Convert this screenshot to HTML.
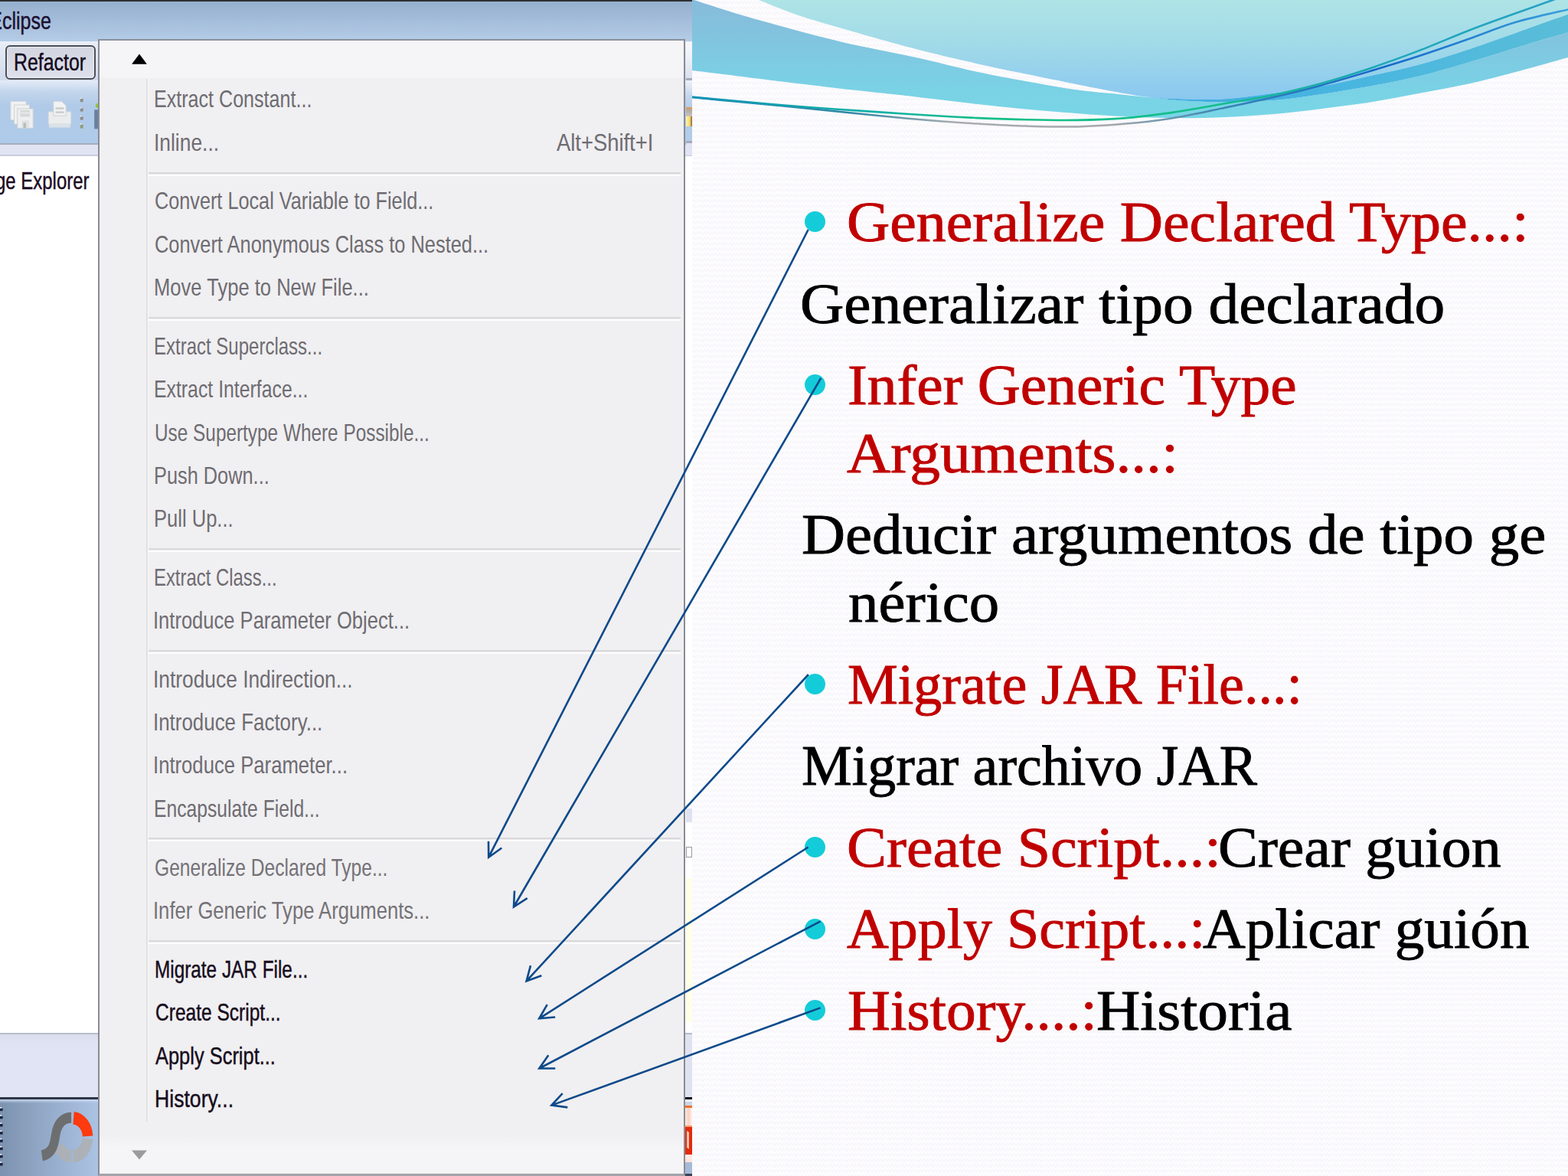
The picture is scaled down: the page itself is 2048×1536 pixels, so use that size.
<!DOCTYPE html>
<html lang="es">
<head>
<meta charset="utf-8">
<title>Eclipse Refactor menu</title>
<style>
html,body{margin:0;padding:0}
body{width:2048px;height:1536px;position:relative;overflow:hidden;background:#fcfbfd}
.abs{position:absolute}
.layer{position:absolute;left:0;top:0;width:0;height:0}
.t{position:absolute;white-space:nowrap;line-height:1;transform-origin:0 0;z-index:6}
.f-sans{font-family:"Liberation Sans",sans-serif}
.f-serif{font-family:"Liberation Serif",serif}
.mi{z-index:4}
.st{-webkit-text-stroke:0.9px currentColor}
.en{-webkit-text-stroke:0.45px currentColor}
.shot{position:absolute;left:0;top:0;width:903.5px;height:1536px;overflow:hidden;background:#fff;z-index:2}
.shot div,.shot i{position:absolute;display:block}
.topbar{left:0;top:0;width:904px;height:2px;background:#2f3032}
.title{left:0;top:2px;width:904px;height:53px;background:linear-gradient(#95b0ce 0,#a2bbd9 40%,#b5cde7 100%)}
.menubar{left:0;top:54px;width:904px;height:51px;background:linear-gradient(#e9eef7,#d9e2f0 60%,#cfdaec)}
.refbtn{left:6.5px;top:58.5px;width:114px;height:41px;border:2px solid #4d4f57;border-radius:6px;background:linear-gradient(#d2d5e0,#d8dbe6 50%,#dde0eb);box-shadow:inset 0 0 0 1.2px rgba(255,255,255,.5)}
.toolbar{left:0;top:105px;width:904px;height:82px;background:linear-gradient(#e4ecf7 0,#c3d5ec 18%,#b0cae8 40%,#aecbe9 100%)}
.tb-line{left:0;top:186.5px;width:904px;height:2px;background:#a4adbe}
.strip{left:0;top:188.5px;width:904px;height:14px;background:#e1e4f3}
.strip2{left:0;top:201.5px;width:904px;height:2px;background:#c9cddb}
.b-line{left:0;top:1348.5px;width:904px;height:2.5px;background:#b9bdca}
.b-strip{left:0;top:1351px;width:904px;height:84px;background:linear-gradient(#d9dcec,#e0e3f3 12%,#e1e4f4)}
.b-dark{left:0;top:1433.3px;width:904px;height:2.4px;background:#2f3747}
.taskbar{left:0;top:1435.7px;width:904px;height:101px;background:linear-gradient(rgba(205,220,240,.9) 0,rgba(205,220,240,0) 5px),linear-gradient(90deg,#7b92b0 0,#889ebb 30px,#a2b9da 100px,#abc3e4 130px)}
.menu{left:127.7px;top:50.7px;width:763.5px;height:1480.6px;border:2px solid #8b8b95;border-top-color:#8a919b;border-bottom:3px solid #a3a3aa;background:#f0eff1;z-index:3}
.menu .hd{left:0;top:0;width:100%;height:49.5px;background:#f5f4f6}
.menu .ft{left:0;top:1430px;width:100%;height:49px;background:linear-gradient(#f0eff1,#f5f4f6 30%)}
.menu .gut1{left:61.6px;top:50.5px;width:1.4px;height:1362px;background:#e0dfe2}
.menu .gut2{left:63px;top:50.5px;width:1.8px;height:1362px;background:#fbfbfc}
.sep{position:absolute;left:193.7px;width:695px;height:5px;z-index:4;background:linear-gradient(#d9d8db 0,#d9d8db 45%,#fdfdfe 55%,#fdfdfe 100%)}
.bul{position:absolute;display:block;width:27px;height:27px;border-radius:50%;background:#14ccd9;z-index:4}
</style>
</head>
<body>
<svg class="abs" style="left:903.5px;top:0;z-index:0" width="1144.5" height="1536">
<defs><pattern id="tx" width="9.4" height="7" patternUnits="userSpaceOnUse"><rect width="9.4" height="7" fill="#fdfcfe"/><path d="M-0.5 5.6L2.35 1.6L4.7 5.6L7.05 1.6L9.9 5.6" fill="none" stroke="#f7f5f9" stroke-width="1.1"/></pattern></defs>
<rect width="1144.5" height="1536" fill="url(#tx)"/></svg>
<svg class="abs" style="left:0;top:0;z-index:1" width="2048" height="200" viewBox="0 0 2048 200">
<defs>
<linearGradient id="gB" x1="0" y1="0" x2="0" y2="135" gradientUnits="userSpaceOnUse"><stop offset="0" stop-color="#afe4e6"/><stop offset="0.4" stop-color="#a2dbe8"/><stop offset="1" stop-color="#89c6f0"/></linearGradient>
<linearGradient id="gA" x1="0" y1="0" x2="0" y2="150" gradientUnits="userSpaceOnUse"><stop offset="0" stop-color="#87bbda"/><stop offset="0.3" stop-color="#82c3de"/><stop offset="0.6" stop-color="#7ccde3"/><stop offset="0.85" stop-color="#79d3e5"/><stop offset="1" stop-color="#78d5e6"/></linearGradient>
<linearGradient id="gC" x1="1495" y1="0" x2="2048" y2="0" gradientUnits="userSpaceOnUse"><stop offset="0" stop-color="#3fabe0"/><stop offset="0.5" stop-color="#49b6e0"/><stop offset="1" stop-color="#5abdd8"/></linearGradient>
<linearGradient id="gG" x1="903" y1="0" x2="2048" y2="0" gradientUnits="userSpaceOnUse"><stop offset="0" stop-color="#1193b4"/><stop offset="0.2" stop-color="#12b0a8"/><stop offset="0.35" stop-color="#14bf86"/><stop offset="0.6" stop-color="#15bd8c"/><stop offset="0.75" stop-color="#1aa9b4"/><stop offset="1" stop-color="#2aa2c8"/></linearGradient>
<linearGradient id="gY" x1="903" y1="0" x2="2048" y2="0" gradientUnits="userSpaceOnUse"><stop offset="0" stop-color="#1487b6"/><stop offset="0.18" stop-color="#2f86a4"/><stop offset="0.3" stop-color="#a9acb0"/><stop offset="0.48" stop-color="#a4a8ac"/><stop offset="0.6" stop-color="#3b86b4"/><stop offset="0.78" stop-color="#1565c8"/><stop offset="1" stop-color="#3aa0dc"/></linearGradient>
<clipPath id="cs"><rect x="903.5" y="0" width="1145" height="200"/></clipPath>
</defs>
<g clip-path="url(#cs)">
<path d="M988.5 -1.0C997.1 2.3 1022.1 12.8 1040.0 19.0C1057.9 25.2 1070.0 28.5 1096.0 36.0C1122.0 43.5 1162.7 55.4 1196.0 64.0C1229.3 72.6 1272.5 82.2 1296.0 87.5C1319.5 92.8 1318.3 92.2 1337.0 96.0C1355.7 99.8 1387.5 106.4 1408.0 110.5C1428.5 114.6 1445.4 117.9 1460.0 120.5C1474.6 123.1 1483.3 124.9 1495.5 126.3C1507.7 127.7 1516.3 128.5 1533.0 129.0C1549.7 129.5 1573.7 130.7 1595.5 129.5C1617.3 128.3 1642.2 124.6 1664.0 121.8C1685.8 119.0 1705.5 116.3 1726.5 112.5C1747.5 108.7 1769.2 103.6 1790.0 99.0C1810.8 94.4 1829.8 90.8 1851.5 85.0C1873.2 79.2 1894.5 72.5 1920.0 64.0C1945.5 55.5 1982.8 41.7 2004.5 34.0C2026.2 26.3 2042.4 20.7 2050.0 18.0L2050 -2L988 -2Z" fill="url(#gB)"/>
<path d="M903.5 -1.0C911.2 1.5 934.6 9.2 950.0 14.0C965.4 18.8 971.7 20.8 996.0 27.5C1020.3 34.2 1062.7 46.1 1096.0 54.0C1129.3 61.9 1165.8 68.3 1196.0 75.0C1226.2 81.7 1253.1 88.8 1277.0 94.0C1300.9 99.2 1317.7 102.1 1339.5 106.0C1361.3 109.9 1387.9 114.8 1408.0 117.6C1428.1 120.4 1445.4 121.5 1460.0 123.0C1474.6 124.5 1483.3 125.4 1495.5 126.6C1507.7 127.8 1516.3 129.2 1533.0 130.4C1549.7 131.6 1573.7 133.4 1595.5 133.5C1617.3 133.6 1642.2 132.7 1664.0 131.0C1685.8 129.3 1705.5 126.2 1726.5 123.1C1747.5 120.0 1769.2 116.3 1790.0 112.5C1810.8 108.7 1829.8 105.2 1851.5 100.0C1873.2 94.8 1894.5 88.5 1920.0 81.0C1945.5 73.5 1982.8 61.5 2004.5 55.0C2026.2 48.5 2042.4 44.2 2050.0 42.0L2050.0 74.5C2038.2 77.8 2001.5 88.2 1979.5 94.0C1957.5 99.8 1939.1 104.8 1918.0 109.5C1896.9 114.2 1874.3 118.0 1853.0 122.0C1831.7 126.0 1811.1 130.2 1790.0 133.5C1768.9 136.8 1747.5 139.3 1726.5 141.9C1705.5 144.5 1685.8 147.1 1664.0 149.0C1642.2 150.9 1617.3 152.4 1595.5 153.2C1573.7 154.1 1553.8 154.3 1533.0 154.1C1512.2 153.9 1491.3 153.2 1470.5 152.2C1449.7 151.3 1429.9 149.8 1408.0 148.2C1386.1 146.6 1360.8 144.5 1339.0 142.5C1317.2 140.5 1300.8 138.7 1277.0 136.0C1253.2 133.3 1216.8 128.9 1196.0 126.5C1175.2 124.1 1168.7 123.4 1152.0 121.6C1135.3 119.8 1117.8 118.0 1096.0 115.5C1074.2 113.0 1047.5 109.8 1021.0 106.6C994.5 103.3 956.6 98.4 937.0 96.0C917.4 93.6 909.1 92.7 903.5 92.0Z" fill="url(#gA)"/>
<path d="M1500.0 126.8C1505.5 127.2 1517.1 128.6 1533.0 129.0C1548.9 129.4 1573.7 130.7 1595.5 129.5C1617.3 128.3 1642.2 124.6 1664.0 121.8C1685.8 119.0 1705.5 116.3 1726.5 112.5C1747.5 108.7 1769.2 103.6 1790.0 99.0C1810.8 94.4 1829.8 90.8 1851.5 85.0C1873.2 79.2 1894.5 72.5 1920.0 64.0C1945.5 55.5 1982.8 41.7 2004.5 34.0C2026.2 26.3 2042.4 20.7 2050.0 18.0L2050.0 42.0C2042.4 44.2 2026.2 48.5 2004.5 55.0C1982.8 61.5 1945.5 73.5 1920.0 81.0C1894.5 88.5 1873.2 94.8 1851.5 100.0C1829.8 105.2 1810.8 108.7 1790.0 112.5C1769.2 116.3 1747.5 120.0 1726.5 123.1C1705.5 126.2 1685.8 129.3 1664.0 131.0C1642.2 132.7 1617.3 133.6 1595.5 133.5C1573.7 133.4 1548.9 131.5 1533.0 130.4C1517.1 129.3 1505.5 127.4 1500.0 126.8Z" fill="url(#gC)"/>
<path d="M903.5 126.9C912.9 127.9 940.4 130.7 960.0 132.6C979.6 134.5 999.3 136.2 1021.0 138.3C1042.7 140.4 1068.2 143.1 1090.0 145.3C1111.8 147.5 1131.2 149.6 1152.0 151.6C1172.8 153.6 1194.2 155.5 1215.0 157.2C1235.8 158.9 1256.2 160.4 1277.0 161.6C1297.8 162.8 1318.2 164.0 1340.0 164.6C1361.8 165.2 1386.2 165.9 1408.0 165.4C1429.8 164.9 1449.7 163.5 1470.5 161.6C1491.3 159.7 1512.2 157.4 1533.0 154.1C1553.8 150.8 1573.7 146.2 1595.5 141.6C1617.3 137.0 1642.2 131.9 1664.0 126.8C1685.8 121.7 1705.7 116.9 1726.5 111.2C1747.3 105.6 1768.2 99.3 1789.0 93.1C1809.8 86.8 1830.0 80.8 1851.5 73.8C1873.0 66.7 1896.7 58.5 1918.0 51.0C1939.3 43.5 1957.5 35.5 1979.5 29.0C2001.5 22.5 2038.2 14.8 2050.0 12.0" fill="none" stroke="url(#gY)" stroke-width="2.5"/>
<path d="M903.5 126.6C912.9 127.5 940.4 130.0 960.0 131.8C979.6 133.6 999.3 135.4 1021.0 137.2C1042.7 139.0 1068.2 140.9 1090.0 142.5C1111.8 144.1 1131.2 145.2 1152.0 146.6C1172.8 148.0 1194.2 149.6 1215.0 150.8C1235.8 152.1 1256.2 153.2 1277.0 154.1C1297.8 155.0 1318.2 155.8 1340.0 156.3C1361.8 156.8 1386.2 157.3 1408.0 156.9C1429.8 156.5 1449.7 155.8 1470.5 154.1C1491.3 152.4 1512.2 149.6 1533.0 146.6C1553.8 143.6 1573.7 139.8 1595.5 136.0C1617.3 132.2 1642.2 128.4 1664.0 123.9C1685.8 119.4 1705.7 114.5 1726.5 108.8C1747.3 103.0 1768.2 96.4 1789.0 89.4C1809.8 82.4 1830.0 75.1 1851.5 66.9C1873.0 58.7 1897.4 48.0 1918.0 40.0C1938.6 32.0 1956.2 25.8 1975.0 19.0C1993.8 12.2 2021.7 2.3 2031.0 -1.0" fill="none" stroke="url(#gG)" stroke-width="2.6"/>
</g></svg>
<div class="shot">
  <div class="title"></div>
  <div class="topbar"></div>
  <div class="menubar"></div>
  <div class="refbtn"></div>
  <div class="toolbar"></div>
  <div class="tb-line"></div>
  <div class="strip"></div>
  <div class="strip2"></div>
  <svg class="abs" style="left:0;top:104px" width="132" height="84" viewBox="0 104 132 84">
  <g opacity=".92">
    <!-- save all (disabled) -->
    <rect x="14" y="132.5" width="20" height="24" fill="#f6f6f4" stroke="#dcdcda" stroke-width="1"/>
    <rect x="18.5" y="137" width="20" height="25" fill="#f4f4f2" stroke="#d6d6d4" stroke-width="1"/>
    <rect x="22.8" y="142" width="20.4" height="25.3" fill="#f3f3f1" stroke="#d2d2d0" stroke-width="1"/>
    <rect x="26.5" y="144" width="12.5" height="8.5" fill="#dadad8"/>
    <rect x="26.5" y="146.5" width="12.5" height="2" fill="#ececea"/>
    <rect x="28.6" y="157.5" width="9" height="9.8" fill="#e2e2e0"/>
    <rect x="30.5" y="160.5" width="3.4" height="6.8" fill="#b9b9b7"/>
    <!-- print (disabled) -->
    <path d="M70 132.7H80.5L86 138V151H70Z" fill="#f7f7f5" stroke="#dededc" stroke-width="1"/>
    <rect x="72.5" y="140.2" width="11" height="2.6" fill="#cfcfcd"/>
    <rect x="72.5" y="145.4" width="11" height="2.6" fill="#cfcfcd"/>
    <path d="M63.3 146H69.5V151.5H86.5V146H92.7V162H63.3Z" fill="#f0f0ee" stroke="#dcdcda" stroke-width="1"/>
    <rect x="64" y="162" width="28" height="4.6" fill="#dfe3e8"/>
  </g>
  <!-- dotted handle -->
  <g fill="#8f8b86">
    <rect x="104.8" y="128.8" width="3.8" height="4.4"/><rect x="104.8" y="141.2" width="3.8" height="4.4"/>
    <rect x="104.8" y="152.2" width="3.8" height="4.4"/><rect x="104.8" y="162.6" width="3.8" height="5" fill="#8f9a78"/>
  </g>
  <g fill="#e6ecf6" opacity=".8">
    <rect x="104.2" y="127.6" width="3" height="1.6"/><rect x="104.2" y="140" width="3" height="1.6"/>
    <rect x="104.2" y="151" width="3" height="1.6"/><rect x="104.2" y="161.4" width="3" height="1.6"/>
  </g>
  <rect x="123.2" y="143.3" width="8" height="25" fill="#67809f"/>
  <circle cx="127.8" cy="138" r="3" fill="#8cc63f"/>
</svg>
  <div class="b-line"></div>
  <div class="b-strip"></div>
  <div class="b-dark"></div>
  <div class="taskbar"></div>
  <svg class="abs" style="left:0;top:1436px" width="132" height="100" viewBox="0 1436 132 100">
  <g fill="#18253f">
    <rect x="0" y="1447.5" width="3.6" height="3.6"/><rect x="0" y="1457.7" width="3.6" height="3.6"/><rect x="0" y="1467.9" width="3.6" height="3.6"/><rect x="0" y="1478.1" width="3.6" height="3.6"/>
    <rect x="0" y="1488.3" width="3.6" height="3.6"/><rect x="0" y="1498.5" width="3.6" height="3.6"/><rect x="0" y="1508.7" width="3.6" height="3.6"/><rect x="0" y="1518.9" width="3.6" height="3.6"/>
  </g>
  <g fill="#e8eef8">
    <rect x="0" y="1446" width="2.4" height="1.5"/><rect x="0" y="1456.2" width="2.4" height="1.5"/><rect x="0" y="1466.4" width="2.4" height="1.5"/><rect x="0" y="1476.6" width="2.4" height="1.5"/>
    <rect x="0" y="1486.8" width="2.4" height="1.5"/><rect x="0" y="1497" width="2.4" height="1.5"/><rect x="0" y="1507.2" width="2.4" height="1.5"/><rect x="0" y="1517.4" width="2.4" height="1.5"/>
  </g>
  <g fill="none" stroke-width="13.4" transform="translate(94.3 1485.3) scale(1 1.24)">
    <path d="M1.77 -20.22A20.3 20.3 0 0 1 20.27 -1.06" stroke="#ff3a0e"/>
    <path d="M20.22 1.77A20.3 20.3 0 0 1 1.42 20.25" stroke="#adb0b3" stroke-opacity=".9"/>
    <path d="M-1.42 20.25A20.3 20.3 0 0 1 -17.92 9.53" stroke="#adb0b3" stroke-opacity=".9"/>
    <path d="M-1.2 -20.6C-13 -20.6 -19.5 -13 -21.5 -3C-23.5 7.5 -25 17 -39.5 19.5" stroke="#6d6e70" stroke-width="11.4"/>
  </g>
</svg>
  <div style="left:895.5px;top:55px;width:9px;height:48px;background:linear-gradient(#f6f8fc,#eef1f8 40%,#d9dfee)"></div>
  <div style="left:895.5px;top:102px;width:9px;height:2.5px;background:#a5adbc"></div>
  <div style="left:895.5px;top:104.5px;width:9px;height:80px;background:linear-gradient(#eef2fa,#c5d6ec 25%,#b0cbe8 50%,#b3cde9)"></div>
  <div style="left:896px;top:140px;width:8px;height:12px;background:linear-gradient(#e79a4a,#b5aaa4 35%,#c9c3c4)"></div>
  <div style="left:896px;top:152px;width:8px;height:13px;background:linear-gradient(90deg,#fbf3b0,#f7dc6a 60%,#8a5a3c)"></div>
  <div style="left:895.5px;top:184px;width:9px;height:2.5px;background:#a2abbc"></div>
  <div style="left:895.5px;top:186.5px;width:9px;height:16px;background:#e0e3f3"></div>
  <div style="left:895.5px;top:1056px;width:9px;height:18px;background:#dfe2f0"></div>
  <div style="left:896px;top:1106px;width:8px;height:14px;background:#fff;border:1.5px solid #9a9ca6;box-sizing:border-box"></div>
  <div style="left:895.5px;top:1147px;width:9px;height:188px;background:#ffffe6"></div>
  <div style="left:895.5px;top:1352px;width:9px;height:82px;background:#dfe2f1"></div>
  <div style="left:895.2px;top:1433.2px;width:9px;height:2.8px;background:#0b0c0f"></div>
  <div style="left:895.2px;top:1436px;width:9px;height:3px;background:#f4f6fa"></div>
  <div style="left:895.2px;top:1439px;width:9px;height:4.5px;background:#c9d5e5"></div>
  <div style="left:895.2px;top:1443.5px;width:9px;height:3px;background:#f0722c"></div>
  <div style="left:895.2px;top:1446.5px;width:9px;height:24px;background:linear-gradient(90deg,#fde9e0,#f9cfc0 50%,#fef3ee)"></div>
  <div style="left:895.2px;top:1470px;width:9px;height:2px;background:#f3a070"></div>
  <div style="left:895.2px;top:1472px;width:9px;height:36px;background:#e52b09"></div>
  <div style="left:897px;top:1478px;width:3.4px;height:22px;background:#f8ddd2;opacity:.85;transform:skewY(28deg)"></div>
  <div style="left:895.2px;top:1508px;width:9px;height:10px;background:linear-gradient(#fdeee8,#fbe3da)"></div>
  <div style="left:895.2px;top:1518px;width:9px;height:15px;background:#a6bbd7"></div>
  <div style="left:895.2px;top:1533px;width:9px;height:3px;background:#3a4256"></div>
  <div class="menu">
    <div class="hd"></div>
    <div class="ft"></div>
    <div class="gut1"></div>
    <div class="gut2"></div>
    <svg class="abs" style="left:40.3px;top:17.5px" width="24" height="16" viewBox="0 0 24 16"><path d="M12 0.4L21.9 13.8H2.1Z" fill="#000"/></svg>
    <svg class="abs" style="left:40.3px;top:1447.8px" width="24" height="16" viewBox="0 0 24 16"><path d="M2 2.5H22L12 14.5Z" fill="#9b9b9d"/></svg>
  </div>
</div>
<div class="abs" style="left:0;top:0;width:903.5px;height:1536px;overflow:hidden;z-index:4"><div class="sep" style="top:224.8px"></div><div class="sep" style="top:413.8px"></div><div class="sep" style="top:716.3px"></div><div class="sep" style="top:849.3px"></div><div class="sep" style="top:1093.8px"></div><div class="sep" style="top:1227.8px"></div></div>
<i class="bul" style="left:1050.5px;top:276.3px"></i><i class="bul" style="left:1050.7px;top:489.3px"></i><i class="bul" style="left:1050.7px;top:879.7px"></i><i class="bul" style="left:1050.7px;top:1093.0px"></i><i class="bul" style="left:1050.7px;top:1199.5px"></i><i class="bul" style="left:1050.7px;top:1306.0px"></i>
<svg class="abs" style="left:0;top:0;z-index:5" width="2048" height="1536" viewBox="0 0 2048 1536"><g fill="none" stroke="#0d4a8a" stroke-width="2.6" stroke-linecap="butt" stroke-linejoin="miter"><path d="M1055.6 300.0L638.2 1119.7M655.3 1107.5L638.2 1119.7L638.0 1098.7"/><path d="M1072.2 493.8L671.0 1184.5M688.7 1173.2L671.0 1184.5L672.0 1163.5"/><path d="M1055.9 881.0L687.6 1281.4M707.3 1274.2L687.6 1281.4L693.0 1261.1"/><path d="M1055.6 1106.5L704.2 1330.3M725.1 1328.5L704.2 1330.3L714.7 1312.1"/><path d="M1071.5 1203.4L704.3 1395.5M725.3 1395.5L704.3 1395.5L716.3 1378.3"/><path d="M1071.5 1316.4L720.4 1443.6M741.3 1446.4L720.4 1443.6L734.7 1428.2"/></g></svg>
<div class="layer" style="z-index:4">
<span class="t f-sans mi" style="left:201.1px;top:113.0px;font-size:32px;color:#6e6c72;transform:scaleX(0.7840)">Extract Constant...</span>
<span class="t f-sans mi" style="left:200.5px;top:169.5px;font-size:32px;color:#6e6c72;transform:scaleX(0.8247)">Inline...</span>
<span class="t f-sans mi" style="left:201.9px;top:246.0px;font-size:32px;color:#6e6c72;transform:scaleX(0.7888)">Convert Local Variable to Field...</span>
<span class="t f-sans mi" style="left:201.9px;top:302.5px;font-size:32px;color:#6e6c72;transform:scaleX(0.7936)">Convert Anonymous Class to Nested...</span>
<span class="t f-sans mi" style="left:201.1px;top:359.0px;font-size:32px;color:#6e6c72;transform:scaleX(0.7991)">Move Type to New File...</span>
<span class="t f-sans mi" style="left:201.2px;top:435.5px;font-size:32px;color:#6e6c72;transform:scaleX(0.7500)">Extract Superclass...</span>
<span class="t f-sans mi" style="left:201.2px;top:492.0px;font-size:32px;color:#6e6c72;transform:scaleX(0.7756)">Extract Interface...</span>
<span class="t f-sans mi" style="left:202.0px;top:548.5px;font-size:32px;color:#6e6c72;transform:scaleX(0.7612)">Use Supertype Where Possible...</span>
<span class="t f-sans mi" style="left:201.1px;top:604.5px;font-size:32px;color:#6e6c72;transform:scaleX(0.7919)">Push Down...</span>
<span class="t f-sans mi" style="left:201.1px;top:661.0px;font-size:32px;color:#6e6c72;transform:scaleX(0.7984)">Pull Up...</span>
<span class="t f-sans mi" style="left:201.3px;top:738.0px;font-size:32px;color:#6e6c72;transform:scaleX(0.7464)">Extract Class...</span>
<span class="t f-sans mi" style="left:200.1px;top:794.0px;font-size:32px;color:#6e6c72;transform:scaleX(0.7983)">Introduce Parameter Object...</span>
<span class="t f-sans mi" style="left:200.0px;top:870.5px;font-size:32px;color:#6e6c72;transform:scaleX(0.8232)">Introduce Indirection...</span>
<span class="t f-sans mi" style="left:200.1px;top:927.0px;font-size:32px;color:#6e6c72;transform:scaleX(0.8097)">Introduce Factory...</span>
<span class="t f-sans mi" style="left:200.1px;top:983.0px;font-size:32px;color:#6e6c72;transform:scaleX(0.8023)">Introduce Parameter...</span>
<span class="t f-sans mi" style="left:201.2px;top:1039.5px;font-size:32px;color:#6e6c72;transform:scaleX(0.7709)">Encapsulate Field...</span>
<span class="t f-sans mi" style="left:202.0px;top:1116.5px;font-size:32px;color:#747277;transform:scaleX(0.7685)">Generalize Declared Type...</span>
<span class="t f-sans mi" style="left:200.1px;top:1173.0px;font-size:32px;color:#747277;transform:scaleX(0.8011)">Infer Generic Type Arguments...</span>
<span class="t f-sans mi en" style="left:202.0px;top:1249.5px;font-size:32px;color:#160c1c;transform:scaleX(0.7606)">Migrate JAR File...</span>
<span class="t f-sans mi en" style="left:202.7px;top:1306.0px;font-size:32px;color:#160c1c;transform:scaleX(0.7667)">Create Script...</span>
<span class="t f-sans mi en" style="left:203.0px;top:1362.5px;font-size:32px;color:#160c1c;transform:scaleX(0.7949)">Apply Script...</span>
<span class="t f-sans mi en" style="left:201.8px;top:1418.5px;font-size:32px;color:#160c1c;transform:scaleX(0.8319)">History...</span>
<span class="t f-sans mi" style="left:727.0px;top:169.5px;font-size:32px;color:#6e6c72;transform:scaleX(0.8552)">Alt+Shift+I</span>
<span class="t f-sans mi en" style="left:3.0px;top:10.8px;font-size:32px;color:#1a1030;transform:scaleX(0.7812)"><span style="position:absolute;right:100%;top:0">E</span>clipse</span>
<span class="t f-sans mi en" style="left:18.4px;top:64.5px;font-size:32px;color:#140a20;transform:scaleX(0.7773)">Refactor</span>
<span class="t f-sans mi en" style="left:-5.7px;top:220.0px;font-size:32px;color:#1c0c24;transform:scaleX(0.7485)">ge Explorer</span>
</div>
<div class="layer" style="z-index:6">
<span class="t f-serif st" style="left:1105.8px;top:253.2px;font-size:74px;color:#c00000;transform:scaleX(1.0526)">Generalize Declared Type...:</span>
<span class="t f-serif st" style="left:1044.8px;top:359.7px;font-size:74px;color:#000000;transform:scaleX(1.0732)">Generalizar tipo declarado</span>
<span class="t f-serif st" style="left:1106.9px;top:466.2px;font-size:74px;color:#c00000;transform:scaleX(1.0467)">Infer Generic Type</span>
<span class="t f-serif st" style="left:1106.0px;top:555.2px;font-size:74px;color:#c00000;transform:scaleX(1.0729)">Arguments...:</span>
<span class="t f-serif st" style="left:1046.9px;top:660.7px;font-size:74px;color:#000000;transform:scaleX(1.0673)">Deducir argumentos de tipo ge</span>
<span class="t f-serif st" style="left:1107.9px;top:749.7px;font-size:74px;color:#000000;transform:scaleX(1.0659)">nérico</span>
<span class="t f-serif st" style="left:1107.0px;top:856.7px;font-size:74px;color:#c00000;transform:scaleX(1.0000)">Migrate JAR File...:</span>
<span class="t f-serif st" style="left:1047.0px;top:963.2px;font-size:74px;color:#000000;transform:scaleX(0.9983)">Migrar archivo JAR</span>
<span class="t f-serif st" style="left:1105.8px;top:1070.2px;font-size:74px;color:#c00000;transform:scaleX(1.0526)">Create Script...:</span>
<span class="t f-serif st" style="left:1590.8px;top:1070.2px;font-size:74px;color:#000000;transform:scaleX(1.0517)">Crear guion</span>
<span class="t f-serif st" style="left:1106.0px;top:1176.4px;font-size:74px;color:#c00000;transform:scaleX(1.0266)">Apply Script...:</span>
<span class="t f-serif st" style="left:1571.0px;top:1176.4px;font-size:74px;color:#000000;transform:scaleX(1.0429)">Aplicar guión</span>
<span class="t f-serif st" style="left:1106.9px;top:1283.0px;font-size:74px;color:#c00000;transform:scaleX(1.0461)">History....:</span>
<span class="t f-serif st" style="left:1431.9px;top:1283.0px;font-size:74px;color:#000000;transform:scaleX(1.0720)">Historia</span>
</div>
</body>
</html>
